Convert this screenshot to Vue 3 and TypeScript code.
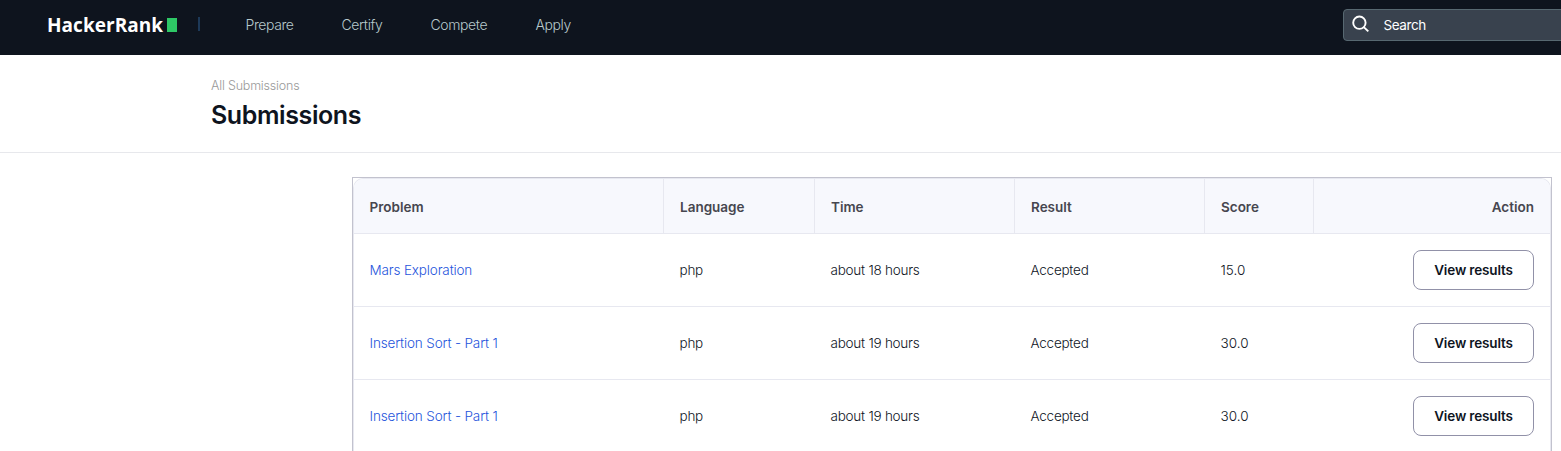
<script setup lang="ts">
interface Submission {
  id: number
  problem: string
  language: string
  time: string
  score: string
}

const links: string[] = ['Prepare', 'Certify', 'Compete', 'Apply']
const columns: string[] = ['Problem', 'Language', 'Time', 'Result', 'Score', 'Action']
const submissions: Submission[] = [
  { id: 1, problem: 'Mars Exploration', language: 'php', time: 'about 18 hours', score: '15.0' },
  { id: 2, problem: 'Insertion Sort - Part 1', language: 'php', time: 'about 19 hours', score: '30.0' },
  { id: 3, problem: 'Insertion Sort - Part 1', language: 'php', time: 'about 19 hours', score: '30.0' },
]
</script>

<template>
  <div class="page">
    <header class="navbar">
      <a class="logo"><span class="wordmark">HackerRank</span><span class="block"></span></a>
      <span class="divider"></span>
      <nav class="nav">
        <a v-for="link in links" :key="link" :class="['nav-link', link.toLowerCase()]">{{ link }}</a>
      </nav>
      <div class="search">
        <svg class="search-icon" width="18" height="18" viewBox="0 0 18 18" fill="none" stroke="#fff" stroke-width="1.9">
          <circle cx="7.4" cy="7.7" r="6.2" />
          <path d="M11.8 12.1L16.3 16.4" />
        </svg>
        <span class="search-text">Search</span>
      </div>
    </header>

    <section class="heading">
      <div class="crumb">All Submissions</div>
      <h1 class="title">Submissions</h1>
    </section>

    <main class="frame">
      <div class="table">
        <div class="row head">
          <div v-for="column in columns" :key="column" class="cell"><span>{{ column }}</span></div>
        </div>
        <div v-for="item in submissions" :key="item.id" class="row body">
          <div class="cell"><a class="link">{{ item.problem }}</a></div>
          <div class="cell">{{ item.language }}</div>
          <div class="cell">{{ item.time }}</div>
          <div class="cell">Accepted</div>
          <div class="cell score">{{ item.score }}</div>
          <div class="cell"><button class="button" type="button">View results</button></div>
        </div>
      </div>
    </main>
  </div>
</template>

<style>
body {
  margin: 0;
  background: #fff;
}
</style>

<style scoped>
.page {
  width: 1561px;
  height: 451px;
  overflow: hidden;
  box-sizing: border-box;
  background: #fff;
  color: #0e141e;
  font-family: Inter, "Liberation Sans", sans-serif;
  font-size: 14px;
}
.navbar {
  display: flex;
  height: 55px;
  background: #0e141e;
}
.logo {
  display: flex;
  margin-left: 47px;
  width: 130px;
  height: 50px;
  align-items: center;
  justify-content: space-between;
}
.wordmark {
  color: #fff;
  font-family: "Open Sans", sans-serif;
  font-weight: 750;
  font-size: 19px;
  line-height: 26px;
  letter-spacing: 0.05px;
}
.block {
  width: 10px;
  height: 14px;
  background: #2ec866;
}
.divider {
  width: 2px;
  height: 14px;
  margin: 17px 0 0 21px;
  background: #1d3958;
}
.nav {
  display: flex;
  margin-left: 45.5px;
  height: 50px;
  align-items: center;
}
.nav-link {
  color: #b7c9cc;
  font-weight: 350;
  line-height: 20px;
  letter-spacing: -0.4px;
}
.prepare { width: 96px; }
.certify { width: 89px; }
.compete { width: 105px; }
.search {
  box-sizing: border-box;
  display: flex;
  align-items: center;
  width: 226px;
  height: 32px;
  margin: 9px -8px 0 auto;
  padding-left: 8px;
  border: 1px solid #576871;
  border-radius: 4px;
  background: #39424e;
  color: #fff;
}
.search-icon {
  margin-top: -3px;
}
.search-text {
  margin: -1px 0 0 13.5px;
  font-size: 13.5px;
  letter-spacing: -0.4px;
}
.heading {
  box-sizing: border-box;
  height: 98px;
  padding: 21px 0 0 211px;
  border-bottom: 1px solid #e7e8ec;
}
.crumb {
  height: 20px;
  color: #999;
  font-weight: 300;
  font-size: 12.5px;
  line-height: 20px;
  letter-spacing: -0.2px;
}
.title {
  margin: 0;
  font-size: 25px;
  font-weight: 600;
  line-height: 38px;
  letter-spacing: -0.4px;
}
.frame {
  box-sizing: border-box;
  width: 1200px;
  height: 300px;
  margin: 24px 0 0 352px;
  border: 1px solid #c2c2ce;
}
.table {
  box-sizing: border-box;
  height: 298px;
  border: 1px solid #e7e8f0;
  border-bottom: 0;
  border-radius: 10px 10px 0 0;
  overflow: hidden;
}
.row {
  box-sizing: border-box;
  display: grid;
  grid-template-columns: 310px 151px 200px 190px 109px 1fr;
  border-bottom: 1px solid #e7e8f0;
}
.cell {
  box-sizing: border-box;
  display: flex;
  align-items: center;
  padding: 0 16px;
}
.cell:last-child {
  justify-content: flex-end;
}
.head {
  height: 55px;
  background: #f7f8fd;
  color: #46464f;
  font-weight: 600;
  font-size: 13.5px;
}
.head .cell {
  padding-top: 2px;
  border-right: 1px solid #e7e8f0;
}
.head .cell:last-child {
  border-right: 0;
}
.body {
  height: 73px;
  font-weight: 350;
  font-size: 13.5px;
  letter-spacing: -0.24px;
}
.body .cell:not(:last-child) {
  padding-bottom: 1px;
  padding-left: 15.5px;
}
.body .score {
  letter-spacing: 0;
}
.link {
  color: #1f55dc;
  letter-spacing: -0.15px;
}
.button {
  box-sizing: border-box;
  width: 121px;
  height: 40px;
  padding: 0 0 1px;
  border: 1px solid #9191a8;
  border-radius: 8px;
  background: #fff;
  color: #0e141e;
  font: 600 13.5px Inter, "Liberation Sans", sans-serif;
  letter-spacing: -0.15px;
}
.row > .cell:first-child {
  padding-left: 15.5px;
}
</style>
